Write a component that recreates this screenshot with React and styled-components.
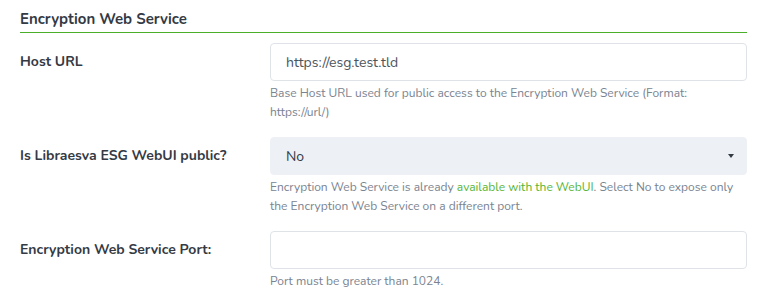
import React from "react";
import styled, { createGlobalStyle } from "styled-components";

const Global = createGlobalStyle`
  html, body { margin: 0; padding: 0; background: #fff; }
  body { font-family: "Nunito", Lato, "Open Sans", sans-serif; }
  * { box-sizing: border-box; }
`;

const Page = styled.div`
  width: 760px;
  padding: 8px 13px 0 20px;
`;

const Title = styled.h2`
  margin: 0;
  font-size: 15px;
  font-weight: 700;
  color: #343a44;
  line-height: 22px;
  padding-bottom: 2px;
  border-bottom: 1px solid #4caf2a;
`;

const Form = styled.div`
  padding-top: 10px;
  display: flex;
  flex-direction: column;
  gap: 15px;
`;

const Row = styled.div`
  display: grid;
  grid-template-columns: 250px 1fr;
  align-items: start;
`;

const Label = styled.label`
  font-size: 14px;
  font-weight: 700;
  color: #343a44;
  line-height: 37px;
`;

const Field = styled.div`
  display: flex;
  flex-direction: column;
`;

const Input = styled.div`
  height: 38px;
  border: 1px solid #dfe3e8;
  border-radius: 4px;
  padding: 0 15px;
  display: flex;
  align-items: center;
  font-size: 14px;
  color: #4c545c;
  background: #fff;
`;

const Select = styled(Input)`
  border-color: #edf0f5;
  background: #edf0f5;
  color: #343a44;
  justify-content: space-between;
  padding-right: 12px;
`;

const Caret = styled.span`
  width: 0;
  height: 0;
  border-left: 3.5px solid transparent;
  border-right: 3.5px solid transparent;
  border-top: 4px solid #343a44;
`;

const Help = styled.p`
  margin: 3px 0 0;
  font-size: 12px;
  line-height: 19px;
  color: #7a8390;
`;

const Link = styled.span`
  color: #55b532;
`;

export default function App() {
  return (
    <>
      <Global />
      <Page>
        <Title>Encryption Web Service</Title>
        <Form>
          <Row>
            <Label>Host URL</Label>
            <Field>
              <Input>https://esg.test.tld</Input>
              <Help>
                Base Host URL used for public access to the Encryption Web Service (Format:
                https://url/)
              </Help>
            </Field>
          </Row>
          <Row>
            <Label>Is Libraesva ESG WebUI public?</Label>
            <Field>
              <Select>
                No
                <Caret />
              </Select>
              <Help>
                Encryption Web Service is already <Link>available with the WebUI</Link>. Select No to
                expose only the Encryption Web Service on a different port.
              </Help>
            </Field>
          </Row>
          <Row>
            <Label>Encryption Web Service Port:</Label>
            <Field>
              <Input />
              <Help>Port must be greater than 1024.</Help>
            </Field>
          </Row>
        </Form>
      </Page>
    </>
  );
}
